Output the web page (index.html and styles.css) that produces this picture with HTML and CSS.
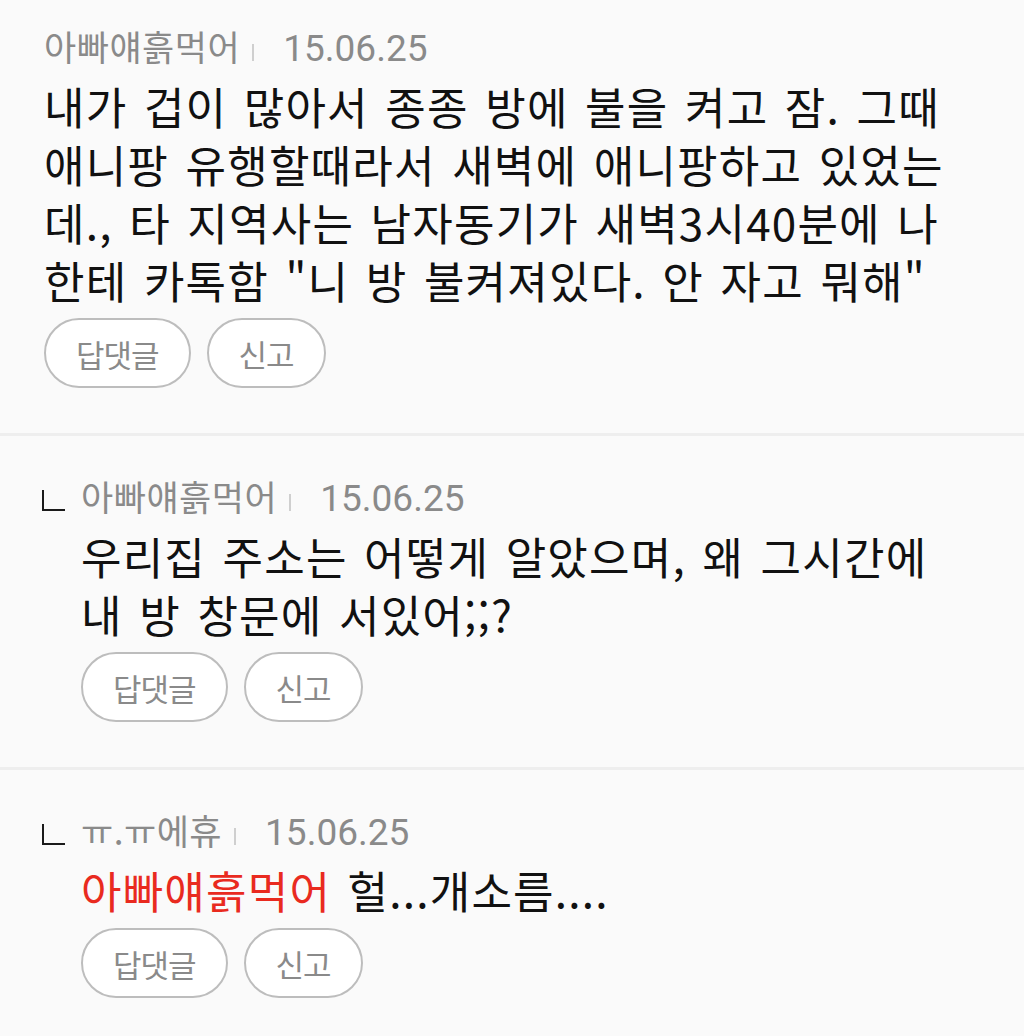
FILE: index.html
```html
<!DOCTYPE html>
<html lang="ko">
<head>
<meta charset="utf-8">
<title>댓글</title>
<link rel="stylesheet" href="styles.css">
</head>
<body>
<div class="list">
  <article class="comment">
    <div class="meta">
      <span class="name">아빠얘흙먹어</span><span class="bar"></span><span class="date">15.06.25</span>
    </div>
    <div class="content">
      <p class="text">내가 겁이 많아서 종종 방에 불을 켜고 잠. 그때<br>애니팡 유행할때라서 새벽에 애니팡하고 있었는<br>데., 타 지역사는 남자동기가 새벽3시40분에 나<br>한테 카톡함 "니 방 불켜져있다. 안 자고 뭐해"</p>
      <div class="actions"><button class="btn">답댓글</button><button class="btn">신고</button></div>
    </div>
  </article>
  <article class="comment reply">
    <div class="meta">
      <span class="mark" aria-hidden="true"></span><span class="name">아빠얘흙먹어</span><span class="bar"></span><span class="date">15.06.25</span>
    </div>
    <div class="content">
      <p class="text">우리집 주소는 어떻게 알았으며, 왜 그시간에<br>내 방 창문에 서있어;;?</p>
      <div class="actions"><button class="btn">답댓글</button><button class="btn">신고</button></div>
    </div>
  </article>
  <article class="comment reply">
    <div class="meta">
      <span class="mark" aria-hidden="true"></span><span class="name">ㅠ.ㅠ에휴</span><span class="bar"></span><span class="date">15.06.25</span>
    </div>
    <div class="content">
      <p class="text"><span class="mention">아빠얘흙먹어</span> 헐...개소름....</p>
      <div class="actions"><button class="btn">답댓글</button><button class="btn">신고</button></div>
    </div>
  </article>
</div>
</body>
</html>
```

FILE: styles.css
```css
html, body {
  margin: 0;
  padding: 0;
  background: #fafafa;
}

body {
  font-family: "Noto Sans CJK KR", "Noto Sans", sans-serif;
  color: #111;
}

.list {
  margin-top: -14px;
}

.comment {
  padding: 38px 0 45px 44px;
  border-bottom: 3px solid #eeeeee;
}

.meta {
  display: flex;
  align-items: baseline;
  height: 44px;
  line-height: 44px;
}

.mark {
  display: inline-block;
  position: relative;
  width: 37px;
  height: 1px;
}

.mark::before {
  content: "";
  position: absolute;
  left: -2px;
  bottom: 0;
  width: 21px;
  height: 19px;
  border-left: 2px solid #1a1a1a;
  border-bottom: 2px solid #1a1a1a;
}

.name {
  font-size: 35px;
  letter-spacing: 0.5px;
  color: #8a8a8a;
}

.bar {
  display: inline-block;
  width: 2px;
  height: 17px;
  background: #cfcfcf;
  margin: 0 29px 0 12px;
}

.date {
  font-family: Roboto, "Noto Sans", sans-serif;
  font-size: 37px;
  color: #8a8a8a;
}

.reply .content {
  margin-left: 37px;
}

.text {
  margin: 9px 0 0;
  font-size: 44px;
  line-height: 58px;
  letter-spacing: 1.2px;
  word-spacing: 3px;
  color: #111;
}

.mention {
  color: #e92a1f;
}

.actions {
  display: flex;
  gap: 16px;
  margin-top: 9px;
}

.btn {
  height: 70px;
  padding: 0 30px;
  border: 2px solid #bdbdbd;
  border-radius: 35px;
  background: #fff;
  font-family: "Noto Sans CJK KR", sans-serif;
  font-size: 31px;
  letter-spacing: -1px;
  color: #8a8a8a;
}
```
